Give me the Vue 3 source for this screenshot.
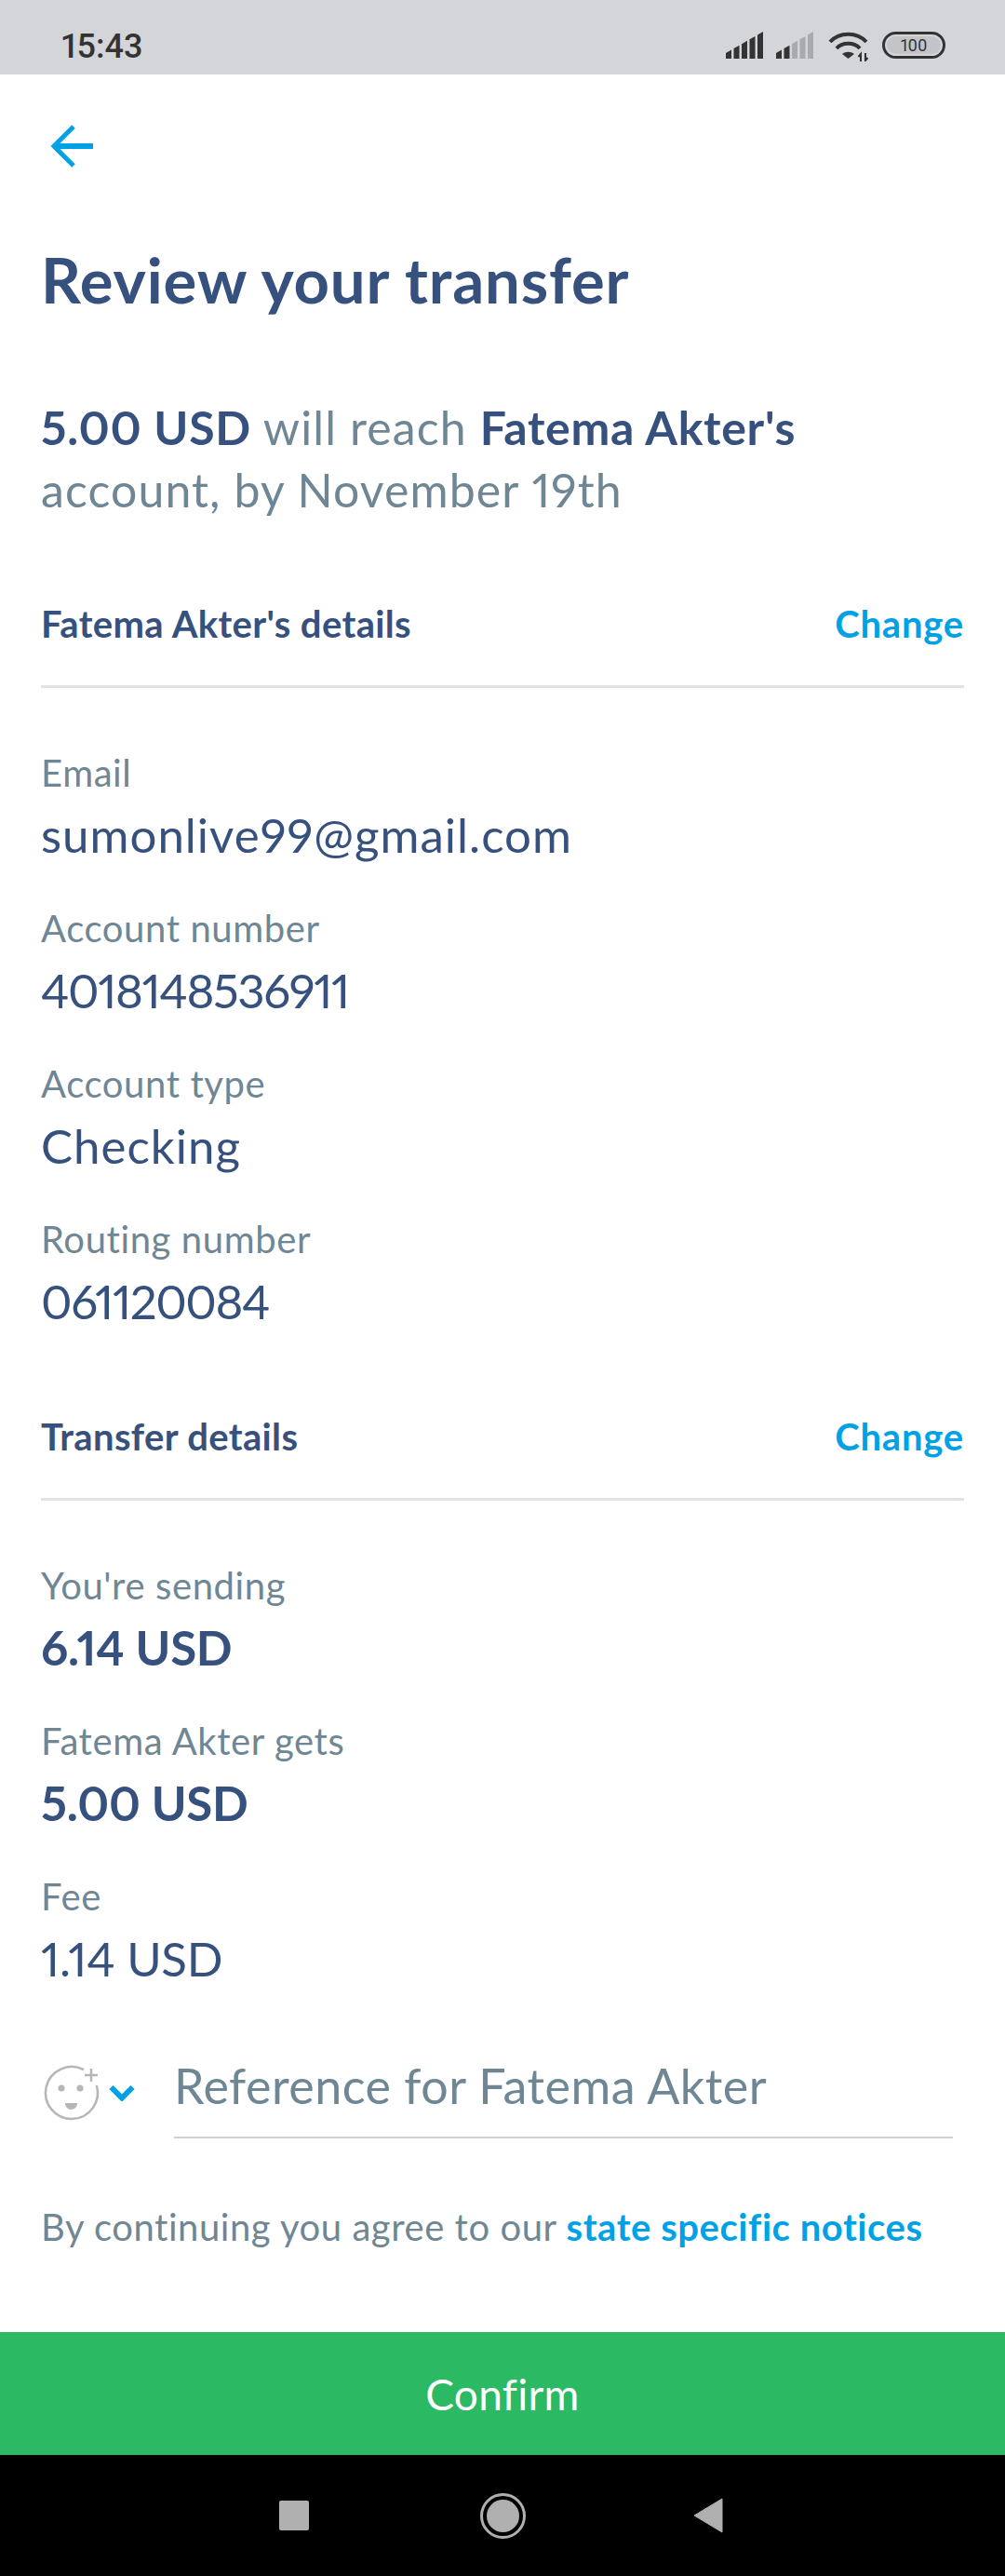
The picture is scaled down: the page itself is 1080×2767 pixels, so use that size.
<template>
  <div class="screen">
    <div class="status-bar">
      <span class="clock">15:43</span>
      <div class="status-icons">
        <svg class="signal" viewBox="0 0 40 29" width="40" height="29">
          <path v-for="(d, i) in bars" :key="i" :d="d" fill="#333" />
        </svg>
        <svg class="signal" viewBox="0 0 40 29" width="40" height="29">
          <path v-for="(d, i) in bars" :key="i" :d="d" :fill="i < 2 ? '#333' : '#a9aaad'" />
        </svg>
        <svg class="wifi" viewBox="0 0 43 32" width="43" height="32">
          <path d="M2 11C12 0 31 0 41 11M9 18c6-7 19-7 25 0" fill="none" stroke="#333" stroke-width="4" />
          <path d="M15 24c4-3 9-3 13 0l-6.500 5z" fill="#333" />
          <path d="M35 32v-8l-2.500 3M40 23v8l2.500-3" fill="none" stroke="#333" stroke-width="2" />
        </svg>
        <div class="battery"><span>100</span></div>
      </div>
    </div>

    <div class="content">
      <svg class="back" viewBox="0 0 46 46" width="46" height="46">
        <path d="M46 23H6" fill="none" stroke="#00a1e5" stroke-width="6" />
        <path d="M25 2L4 23l21 21" fill="none" stroke="#00a1e5" stroke-width="5" />
      </svg>

      <h1 class="title">Review your transfer</h1>

      <p class="summary">
        <b>5.00 USD</b> will reach <b>Fatema Akter's</b><br />account, by November 19th
      </p>

      <div class="section-head first">
        <span class="section-title">Fatema Akter's details</span>
        <span class="change">Change</span>
      </div>
      <div class="rows">
        <div v-for="r in recipient" :key="r.label" class="row">
          <div class="label">{{ r.label }}</div>
          <div class="value" :class="r.kind">{{ r.value }}</div>
        </div>
      </div>

      <div class="section-head second">
        <span class="section-title">Transfer details</span>
        <span class="change">Change</span>
      </div>
      <div class="rows">
        <div v-for="r in transfer" :key="r.label" class="row">
          <div class="label">{{ r.label }}</div>
          <div class="value" :class="r.kind">{{ r.value }}</div>
        </div>
      </div>

      <div class="reference">
        <div class="emoji">
          <svg viewBox="0 0 68 66" width="68" height="66">
            <path d="M46 8.200A28 28 0 1 0 59.800 25" fill="none" stroke="#b5b6b8" stroke-width="2.500" />
            <path d="M54 7v14M47 14h14" stroke="#b5b6b8" stroke-width="2.500" />
            <circle cx="22" cy="28" r="3.500" fill="#b5b6b8" />
            <circle cx="42" cy="28" r="3.500" fill="#b5b6b8" />
            <path d="M26 44h13c0 4-3 7-6.500 7S26 48 26 44z" fill="#b5b6b8" />
          </svg>
          <svg viewBox="0 0 28 18" width="28" height="18">
            <path d="M2.500 3L14 14.500 25.500 3" fill="none" stroke="#00a1e5" stroke-width="6" />
          </svg>
        </div>
        <div class="ref-input">Reference for Fatema Akter</div>
      </div>

      <p class="notice">By continuing you agree to our <a>state specific notices</a></p>
    </div>

    <div class="confirm">Confirm</div>

    <div class="nav-bar">
      <span class="nav-square"></span>
      <span class="nav-circle"></span>
      <svg viewBox="0 0 32 38" width="32" height="38">
        <path d="M31 1v36L1 19z" fill="#b0b0b0" stroke="#b0b0b0" stroke-linejoin="round" />
      </svg>
    </div>
  </div>
</template>

<script setup>
const recipient = [
  { label: 'Email', value: 'sumonlive99@gmail.com' },
  { label: 'Account number', value: '4018148536911', kind: 'digits' },
  { label: 'Account type', value: 'Checking' },
  { label: 'Routing number', value: '061120084', kind: 'digits' }
]

const transfer = [
  { label: "You're sending", value: '6.14 USD', kind: 'money strong' },
  { label: 'Fatema Akter gets', value: '5.00 USD', kind: 'money strong' },
  { label: 'Fee', value: '1.14 USD', kind: 'money' }
]

// signal bars, tops follow one slanted line
const barTop = (x) => 23 - (23 * x) / 40
const bars = [0, 1, 2, 3, 4].map((i) => {
  const x = i * 8.5
  return `M${x} 29V${barTop(x)}L${x + 6} ${barTop(x + 6)}V29Z`
})
</script>

<style>
html,
body {
  margin: 0;
  background: #fff;
}
</style>

<style scoped>
.screen {
  width: 1080px;
  height: 2767px;
  display: flex;
  flex-direction: column;
  font-family: "Lato", "Open Sans", sans-serif;
  font-variant-numeric: proportional-nums;
  color: #37517e;
  background: #fff;
  overflow: hidden;
}

/* status bar */
.status-bar {
  height: 80px;
  background: #d4d5d9;
  display: flex;
  align-items: flex-start;
  justify-content: space-between;
  padding: 0 64px 0 66px;
  box-sizing: border-box;
  flex: none;
}
.clock {
  font-family: "Roboto", sans-serif;
  font-size: 36px;
  font-weight: 500;
  line-height: 40px;
  color: #333;
  margin-top: 30px;
}
.status-icons {
  display: flex;
  align-items: flex-start;
  margin-top: 34px;
}
.signal {
  margin-right: 14px;
}
.signal + .wifi {
  margin-left: 2px;
}
.wifi {
  margin-right: 15px;
}
.battery {
  width: 68px;
  height: 29px;
  box-sizing: border-box;
  border: 3px solid #333;
  border-radius: 15px;
  background: #c3c4c8;
  box-shadow: inset 0 0 0 2px #d4d5d9;
  display: flex;
  align-items: center;
  justify-content: center;
}
.battery span {
  font-family: "Roboto", sans-serif;
  font-size: 18px;
  color: #333;
}

/* content */
.content {
  flex: 1;
  padding: 34px 44px 0;
}
.back {
  display: block;
  margin: 20px 0 0 10px;
}
.title {
  font-size: 67px;
  font-weight: 700;
  letter-spacing: 0.85px;
  line-height: 72px;
  margin: 84px 0 0;
  color: #37517e;
}
.summary {
  font-size: 50px;
  letter-spacing: 1.1px;
  line-height: 67px;
  margin: 90px 0 0;
  color: #6f8694;
}
.summary b {
  color: #37517e;
  font-weight: 700;
  letter-spacing: 0.7px;
}
.section-head {
  display: flex;
  justify-content: space-between;
  align-items: center;
  height: 117px;
  box-sizing: border-box;
  border-bottom: 3px solid #e0e3e6;
  padding-bottom: 18px;
}
.section-head.first {
  margin-top: 62px;
}
.section-head.second {
  margin-top: 23px;
}
.section-title {
  font-size: 40px;
  font-weight: 700;
  letter-spacing: 0.35px;
  color: #37517e;
}
.change {
  font-size: 40px;
  font-weight: 700;
  letter-spacing: 0.8px;
  color: #00a1e5;
}
.rows {
  padding-top: 65px;
}
.row {
  height: 167px;
}
.label {
  font-size: 40px;
  letter-spacing: 0.6px;
  line-height: 52px;
  color: #6f8694;
}
.value {
  font-size: 51px;
  letter-spacing: 1px;
  line-height: 64px;
  margin-top: 9px;
  color: #37517e;
}
.value.digits {
  letter-spacing: -1.400px;
}
.value.money {
  letter-spacing: -0.300px;
}
.value.strong {
  font-weight: 700;
}

.reference {
  display: flex;
  align-items: center;
  margin-top: 20px;
}
.emoji {
  display: flex;
  align-items: center;
  gap: 5px;
  width: 143px;
  flex: none;
}
.ref-input {
  flex: 1;
  font-size: 52px;
  letter-spacing: 0.5px;
  line-height: 64px;
  color: #6f8694;
  padding: 10px 0 23px;
  margin-right: 12px;
  border-bottom: 2px solid #d0d1d3;
}
.notice {
  font-size: 40px;
  letter-spacing: 0.55px;
  line-height: 50px;
  margin: 70px 0 0;
  color: #6f8694;
  white-space: nowrap;
}
.notice a {
  color: #00a1e5;
  font-weight: 700;
}

.confirm {
  height: 132px;
  flex: none;
  background: #2bb964;
  color: #fff;
  font-size: 46px;
  letter-spacing: 0.3px;
  display: flex;
  align-items: center;
  justify-content: center;
}

.nav-bar {
  height: 130px;
  flex: none;
  box-sizing: border-box;
  background: #000;
  display: flex;
  align-items: center;
  padding-left: 300px;
}
.nav-square {
  width: 32px;
  height: 32px;
  background: #b0b0b0;
  border-radius: 2px;
  margin-right: 184px;
}
.nav-circle {
  width: 49px;
  height: 49px;
  box-sizing: border-box;
  border-radius: 50%;
  border: 3px solid #b0b0b0;
  padding: 4px;
  background: #b0b0b0;
  background-clip: content-box;
  margin-right: 180px;
}
</style>
